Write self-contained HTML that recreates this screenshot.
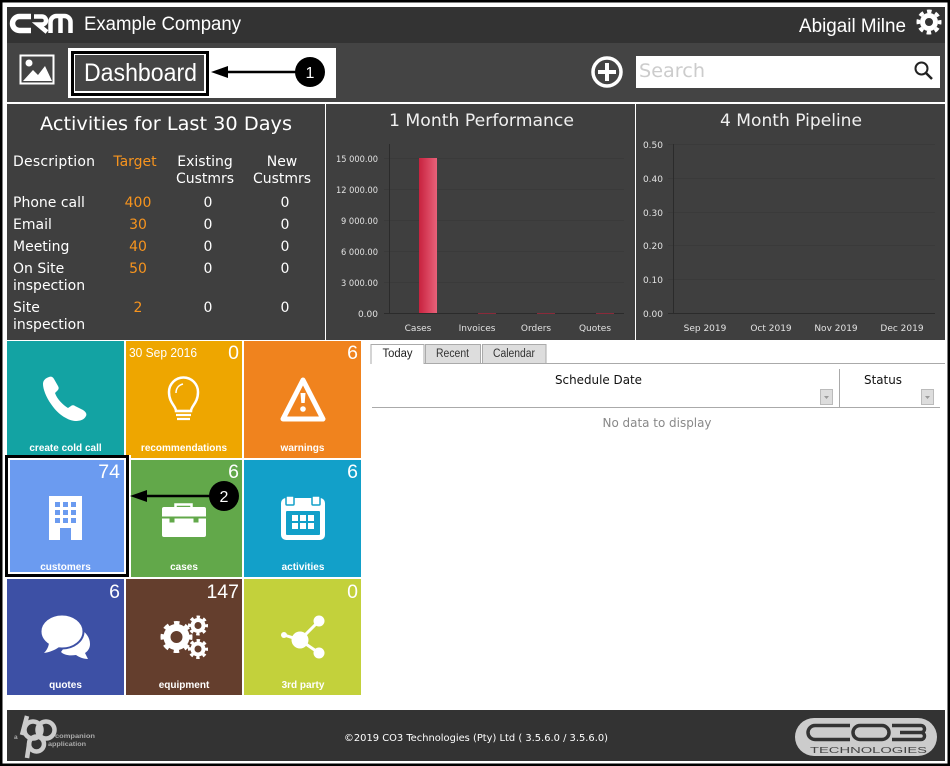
<!DOCTYPE html>
<html><head><meta charset="utf-8"><title>CRM Dashboard</title>
<style>
html,body{margin:0;padding:0;background:#fff;width:950px;height:766px;overflow:hidden}
svg{display:block}
.d{font-family:"DejaVu Sans",sans-serif}
.l{font-family:"Liberation Sans",sans-serif}
.t{font-family:"Liberation Sans",sans-serif;font-weight:bold;font-size:10px;fill:#fff;text-anchor:middle}
.n{font-family:"Liberation Sans",sans-serif;font-size:19.500px;fill:#fff;text-anchor:end}
.ax{font-family:"DejaVu Sans",sans-serif;font-size:9px;fill:#e2e2e2}
.w{font-family:"DejaVu Sans",sans-serif;font-size:14px;fill:#fff}
.o{font-family:"DejaVu Sans",sans-serif;font-size:14px;fill:#f7941e;text-anchor:middle}
.c{text-anchor:middle}
</style></head><body>
<svg width="950" height="766" viewBox="0 0 950 766" xmlns="http://www.w3.org/2000/svg">
<defs><linearGradient id="bar" x1="0" x2="1" y1="0" y2="0"><stop offset="0" stop-color="#c8223f"/><stop offset="1" stop-color="#e9627a"/></linearGradient></defs>
<rect width="950" height="766" fill="#fff"/>
<rect x="1" y="1" width="948" height="764" fill="none" stroke="#000" stroke-width="3"/>

<!-- header -->
<rect x="7" y="7" width="938" height="36" fill="#333"/>
<rect x="7" y="43" width="938" height="59" fill="#444"/>
<g fill="none" stroke="#fff">
<path d="M31 16.500H19.500a7 7 0 0 0 0 14H31" stroke-width="5.500"/>
<path d="M34 16.500H42a4 4 0 0 1 0 8H38L47 32" stroke-width="4.500"/>
<path d="M50.500 33V22a6 6 0 0 1 6-6h8a6 6 0 0 1 6 6V33M60.500 33V17" stroke-width="4.500"/>
</g>
<text x="84" y="30" class="l" font-size="19" fill="#fff" textLength="157" lengthAdjust="spacingAndGlyphs">Example Company</text>
<text x="799" y="32" class="l" font-size="19" fill="#fff" textLength="107" lengthAdjust="spacingAndGlyphs">Abigail Milne</text>
<circle cx="929" cy="22" r="6.500" fill="none" stroke="#fff" stroke-width="5"/>
<circle cx="929" cy="22" r="10.750" fill="none" stroke="#fff" stroke-width="3.500" stroke-dasharray="4.600 3.840" stroke-dashoffset="2.300"/>

<rect x="20.500" y="55.500" width="33" height="28" fill="none" stroke="#fff" stroke-width="2"/>
<circle cx="29" cy="63" r="3.500" fill="#fff"/>
<path d="M23 81L33 70l5 5 7-9 7 15z" fill="#fff"/>

<rect x="68" y="48" width="268" height="50" fill="#fff"/>
<rect x="71" y="51" width="138" height="45" fill="#000"/>
<rect x="74" y="54" width="132" height="39" fill="#fff"/>
<rect x="75" y="55" width="129" height="36" fill="#444"/>
<text x="84" y="81" class="l" font-size="25" fill="#fff" textLength="113" lengthAdjust="spacingAndGlyphs">Dashboard</text>
<path d="M224 72H296" stroke="#000" stroke-width="2.500"/>
<path d="M211 72l17-6v12z" fill="#000"/>
<circle cx="310" cy="72" r="15" fill="#000"/>
<text x="310" y="78" class="l c" font-size="16" fill="#fff">1</text>

<circle cx="607" cy="72" r="14" fill="none" stroke="#fff" stroke-width="3.500"/>
<path d="M607 63V81M598 72H616" stroke="#fff" stroke-width="4"/>
<rect x="636" y="56" width="304" height="32" fill="#fff"/>
<text x="639" y="77" class="d" font-size="19" fill="#ccc" textLength="66" lengthAdjust="spacingAndGlyphs">Search</text>
<circle cx="921.500" cy="68.500" r="6" fill="none" stroke="#222" stroke-width="2"/>
<path d="M926 73l6 6" stroke="#222" stroke-width="2.500"/>

<!-- panels -->
<rect x="7" y="104" width="318" height="236" fill="#3f3f3f"/>
<rect x="326" y="104" width="309" height="236" fill="#3f3f3f"/>
<rect x="636" y="104" width="309" height="236" fill="#3f3f3f"/>

<text x="166" y="130" class="d c" font-size="19" fill="#fff" textLength="252" lengthAdjust="spacingAndGlyphs">Activities for Last 30 Days</text>
<text x="13" y="166" class="w" textLength="82">Description</text>
<text x="135" y="166" class="o">Target</text>
<text x="205" y="166" class="w c">Existing</text>
<text x="205" y="183" class="w c">Custmrs</text>
<text x="282" y="166" class="w c">New</text>
<text x="282" y="183" class="w c">Custmrs</text>
<text x="13" y="207" class="w">Phone call</text><text x="138" y="207" class="o">400</text><text x="208" y="207" class="w c">0</text><text x="285" y="207" class="w c">0</text>
<text x="13" y="229" class="w">Email</text><text x="138" y="229" class="o">30</text><text x="208" y="229" class="w c">0</text><text x="285" y="229" class="w c">0</text>
<text x="13" y="251" class="w">Meeting</text><text x="138" y="251" class="o">40</text><text x="208" y="251" class="w c">0</text><text x="285" y="251" class="w c">0</text>
<text x="13" y="273" class="w">On Site</text><text x="138" y="273" class="o">50</text><text x="208" y="273" class="w c">0</text><text x="285" y="273" class="w c">0</text>
<text x="13" y="290" class="w">inspection</text>
<text x="13" y="312" class="w">Site</text><text x="138" y="312" class="o">2</text><text x="208" y="312" class="w c">0</text><text x="285" y="312" class="w c">0</text>
<text x="13" y="329" class="w">inspection</text>

<!-- performance chart -->
<text x="481.500" y="126" class="d c" font-size="17" fill="#f0f0f0" textLength="185" lengthAdjust="spacingAndGlyphs">1 Month Performance</text>
<g stroke="#3a3a3a" stroke-width="1"><path d="M384 158.500H624M384 189.500H624M384 220.500H624M384 251.500H624M384 282.500H624"/></g>
<path d="M389.500 144V313.500M384 313.500H624" stroke="#2b2b2b" fill="none"/>
<rect x="419" y="158" width="18" height="155" fill="url(#bar)"/>
<path d="M478 313.500H496M537 313.500H555M596 313.500H614" stroke="#8a2a3a"/>
<g class="ax" text-anchor="end">
<text x="378" y="162" textLength="42" lengthAdjust="spacingAndGlyphs">15 000.00</text>
<text x="378" y="193" textLength="42" lengthAdjust="spacingAndGlyphs">12 000.00</text>
<text x="378" y="224" textLength="37" lengthAdjust="spacingAndGlyphs">9 000.00</text>
<text x="378" y="255" textLength="37" lengthAdjust="spacingAndGlyphs">6 000.00</text>
<text x="378" y="286" textLength="37" lengthAdjust="spacingAndGlyphs">3 000.00</text>
<text x="378" y="317">0.00</text>
</g>
<g class="ax" text-anchor="middle">
<text x="418" y="331">Cases</text><text x="477" y="331">Invoices</text><text x="536" y="331">Orders</text><text x="595" y="331">Quotes</text>
</g>

<!-- pipeline chart -->
<text x="791" y="126" class="d c" font-size="17" fill="#f0f0f0" textLength="142" lengthAdjust="spacingAndGlyphs">4 Month Pipeline</text>
<g stroke="#3a3a3a"><path d="M668 144.500H935M668 178.500H935M668 212.500H935M668 245.500H935M668 279.500H935"/></g>
<path d="M673.500 144V313.500M668 313.500H935" stroke="#2b2b2b" fill="none"/>
<g class="ax" text-anchor="end">
<text x="663" y="148">0.50</text><text x="663" y="182">0.40</text><text x="663" y="216">0.30</text><text x="663" y="249">0.20</text><text x="663" y="283">0.10</text><text x="663" y="317">0.00</text>
</g>
<g class="ax" text-anchor="middle">
<text x="705" y="331">Sep 2019</text><text x="771" y="331">Oct 2019</text><text x="836" y="331">Nov 2019</text><text x="902" y="331">Dec 2019</text>
</g>

<!-- tiles -->
<rect x="7" y="341" width="117" height="117" fill="#13a3a3"/>
<rect x="126" y="341" width="116" height="117" fill="#eea600"/>
<rect x="244" y="341" width="117" height="117" fill="#f0831e"/>
<rect x="5" y="455" width="124" height="122" fill="#000"/>
<rect x="129" y="455" width="2" height="122" fill="#fff"/>
<rect x="8" y="458" width="118" height="116" fill="#fff"/>
<rect x="10" y="460" width="114" height="112" fill="#6b9bf0"/>
<rect x="131" y="460" width="111" height="117" fill="#62a84a"/>
<rect x="244" y="460" width="117" height="117" fill="#12a0c9"/>
<rect x="7" y="579" width="117" height="116" fill="#3d50a5"/>
<rect x="126" y="579" width="116" height="116" fill="#643e2d"/>
<rect x="244" y="579" width="117" height="116" fill="#c3d13b"/>

<text x="65.500" y="451" class="t">create cold call</text>
<text x="184" y="451" class="t">recommendations</text>
<text x="302.500" y="451" class="t">warnings</text>
<text x="65.500" y="570" class="t">customers</text>
<text x="184" y="570" class="t">cases</text>
<text x="303" y="570" class="t">activities</text>
<text x="65.500" y="688" class="t">quotes</text>
<text x="184" y="688" class="t">equipment</text>
<text x="303" y="688" class="t">3rd party</text>

<text x="129" y="357" class="l" font-size="12.500" fill="#fff" textLength="68" lengthAdjust="spacingAndGlyphs">30 Sep 2016</text>
<text x="239" y="359" class="n">0</text>
<text x="358" y="359" class="n">6</text>
<text x="120" y="478" class="n">74</text>
<text x="239" y="478" class="n">6</text>
<text x="358" y="478" class="n">6</text>
<text x="120" y="598" class="n">6</text>
<text x="239" y="598" class="n">147</text>
<text x="358" y="598" class="n">0</text>

<!-- phone -->
<path d="M49 377c2-1 4 0 5 2l4 7c1 2 1 3-1 5l-2 2c2 6 8 12 13 15l3-2c1-1 3-1 4 0l8 4c3 2 4 4 3 6-2 4-6 5-11 5-9-1-18-8-24-17-5-7-8-15-8-20 0-4 3-6 6-7z" fill="#fff"/>
<!-- bulb -->
<g fill="none" stroke="#fff">
<path d="M176 411c0-5-7-8-7-19a14.500 14.500 0 0 1 29 0c0 11-7 14-7 19z" stroke-width="2.500"/>
<path d="M176 393c0-5 3-8 7-9" stroke-width="1.500"/>
<path d="M175 411H192M176 415H191M177 419H190" stroke-width="2.200"/>
</g>
<!-- warning -->
<path d="M303 380L323 419H283Z" fill="none" stroke="#fff" stroke-width="5" stroke-linejoin="round"/>
<path d="M300.500 393h5l-.8 10h-3.400z" fill="#fff"/><circle cx="303" cy="409" r="2.800" fill="#fff"/>
<!-- building -->
<path d="M49 496H82V540H71V528H60V540H49Z" fill="#fff"/>
<g fill="#6b9bf0"><rect x="55" y="502" width="5" height="5"/><rect x="63" y="502" width="5" height="5"/><rect x="71" y="502" width="5" height="5"/><rect x="55" y="510" width="5" height="5"/><rect x="63" y="510" width="5" height="5"/><rect x="71" y="510" width="5" height="5"/><rect x="55" y="518" width="5" height="5"/><rect x="63" y="518" width="5" height="5"/><rect x="71" y="518" width="5" height="5"/></g>
<!-- case -->
<path d="M175.500 509v-4.500h16V509" fill="none" stroke="#fff" stroke-width="2.500"/>
<rect x="162" y="507" width="44" height="30" rx="2" fill="#fff"/>
<path d="M162 517.500H206" stroke="#62a84a" stroke-width="2"/>
<path d="M170 518v4h4v-4M194 518v4h4v-4" fill="#62a84a" stroke="#62a84a"/>
<!-- arrow 2 -->
<path d="M143 496H212" stroke="#000" stroke-width="2.500"/>
<path d="M130 496l17-6v12z" fill="#000"/>
<circle cx="224" cy="496" r="15" fill="#000"/>
<text x="224" y="502" class="l c" font-size="16" fill="#fff">2</text>
<!-- calendar -->
<rect x="281" y="498" width="44" height="42" rx="5" fill="#fff"/>
<rect x="286" y="496" width="8" height="9" rx="1" fill="#fff" stroke="#12a0c9" stroke-width="1.500"/>
<rect x="312" y="496" width="8" height="9" rx="1" fill="#fff" stroke="#12a0c9" stroke-width="1.500"/>
<rect x="286" y="511" width="34" height="24" rx="1" fill="#12a0c9"/>
<g fill="#fff"><rect x="292" y="515" width="6" height="6"/><rect x="300" y="515" width="6" height="6"/><rect x="308" y="515" width="6" height="6"/><rect x="292" y="523" width="6" height="6"/><rect x="300" y="523" width="6" height="6"/><rect x="308" y="523" width="6" height="6"/></g>
<!-- quotes -->
<path d="M78 628c7 3 12 9 12 16 0 4-2 7-5 9l3 6c-5 0-9-2-12-4-7 1-12 0-15-3z" fill="#fff"/>
<ellipse cx="62" cy="631.500" rx="21.500" ry="17" fill="#fff" stroke="#3d50a5" stroke-width="2"/>
<path d="M49 642c0 4-2 8-5 11 6-1 11-3 15-6z" fill="#fff"/>
<!-- gears -->
<g fill="none" stroke="#fff">
<circle cx="176.500" cy="637" r="9.500" stroke-width="7"/><circle cx="176.500" cy="637" r="13.500" stroke-width="5" stroke-dasharray="5.300 5.300" stroke-dashoffset="2.650"/>
<circle cx="198" cy="625.500" r="5.500" stroke-width="4"/><circle cx="198" cy="625.500" r="8.500" stroke-width="3" stroke-dasharray="3.400 3.280" stroke-dashoffset="1.700"/>
<circle cx="198" cy="649" r="5.500" stroke-width="4"/><circle cx="198" cy="649" r="8.500" stroke-width="3" stroke-dasharray="3.400 3.280" stroke-dashoffset="1.700"/>
</g>
<!-- share -->
<g fill="#fff"><circle cx="300" cy="640" r="8.500"/><circle cx="319" cy="621" r="5.500"/><circle cx="319" cy="653" r="5.500"/><circle cx="284" cy="635" r="3"/></g>
<path d="M300 640L319 621M300 640L319 653M300 640L284 635" stroke="#fff" stroke-width="3"/>

<!-- right pane -->
<path d="M372 363.500H945" stroke="#aaa"/>
<path d="M371 364V344.500H424V364" fill="#fff" stroke="#aaa"/>
<rect x="371.500" y="364" width="52" height="1" fill="#fff"/>
<rect x="425.500" y="344.500" width="55" height="19" fill="#ddd" stroke="#aaa"/>
<rect x="482.500" y="344.500" width="63.500" height="19" fill="#ddd" stroke="#aaa"/>
<g class="l" font-size="11.500">
<text x="397.500" y="357" class="c" fill="#222" textLength="30" lengthAdjust="spacingAndGlyphs">Today</text>
<text x="452.500" y="357" class="c" fill="#333" textLength="33" lengthAdjust="spacingAndGlyphs">Recent</text>
<text x="514" y="357" class="c" fill="#333" textLength="42" lengthAdjust="spacingAndGlyphs">Calendar</text>
</g>
<text x="598.500" y="384" class="d c" font-size="12" fill="#111" textLength="87" lengthAdjust="spacingAndGlyphs">Schedule Date</text>
<text x="883" y="384" class="d c" font-size="12" fill="#111" textLength="38" lengthAdjust="spacingAndGlyphs">Status</text>
<path d="M839.500 369V407" stroke="#aaa"/>
<path d="M372 407.500H940" stroke="#aaa"/>
<rect x="820.500" y="389.500" width="12" height="15" fill="#ddd" stroke="#bbb"/>
<rect x="921.500" y="389.500" width="12" height="15" fill="#ddd" stroke="#bbb"/>
<path d="M824 396h5l-2.500 3zM925 396h5l-2.500 3z" fill="#999"/>
<text x="657" y="427" class="d c" font-size="12" fill="#888" textLength="109" lengthAdjust="spacingAndGlyphs">No data to display</text>

<!-- footer -->
<rect x="7" y="710" width="938" height="51" fill="#333"/>
<g fill="none" stroke="#ccc" stroke-width="4.500">
<circle cx="33" cy="730" r="8.500"/><circle cx="46" cy="730" r="8.500"/><circle cx="36.500" cy="744" r="7.500"/>
<path d="M27 716L22 735"/><path d="M30 738L27 758"/>
</g>
<g class="l" font-weight="bold" font-size="6.500" fill="#aaa">
<text x="14" y="739">a</text>
<text x="55" y="738" textLength="40" lengthAdjust="spacingAndGlyphs">companion</text>
<text x="48" y="746" textLength="38" lengthAdjust="spacingAndGlyphs">application</text>
</g>
<text x="344" y="741" class="d" font-size="10" fill="#fff" textLength="264" lengthAdjust="spacingAndGlyphs">©2019 CO3 Technologies (Pty) Ltd ( 3.5.6.0 / 3.5.6.0)</text>
<rect x="795" y="718" width="142" height="38" rx="19" fill="#ccc"/>
<g fill="none" stroke="#333" stroke-width="3.500">
<path d="M850 725.500H815a7 7 0 0 0 0 14H850"/>
<rect x="853" y="725.500" width="36" height="14" rx="7"/>
<path d="M892 725.500H921a3.500 3.500 0 0 1 0 7H900M921 732.500a3.500 3.500 0 0 1 0 7H892"/>
</g>
<text x="868.500" y="753" class="l c" font-size="8" fill="#444" textLength="117" lengthAdjust="spacingAndGlyphs">TECHNOLOGIES</text>
</svg>
</body></html>
